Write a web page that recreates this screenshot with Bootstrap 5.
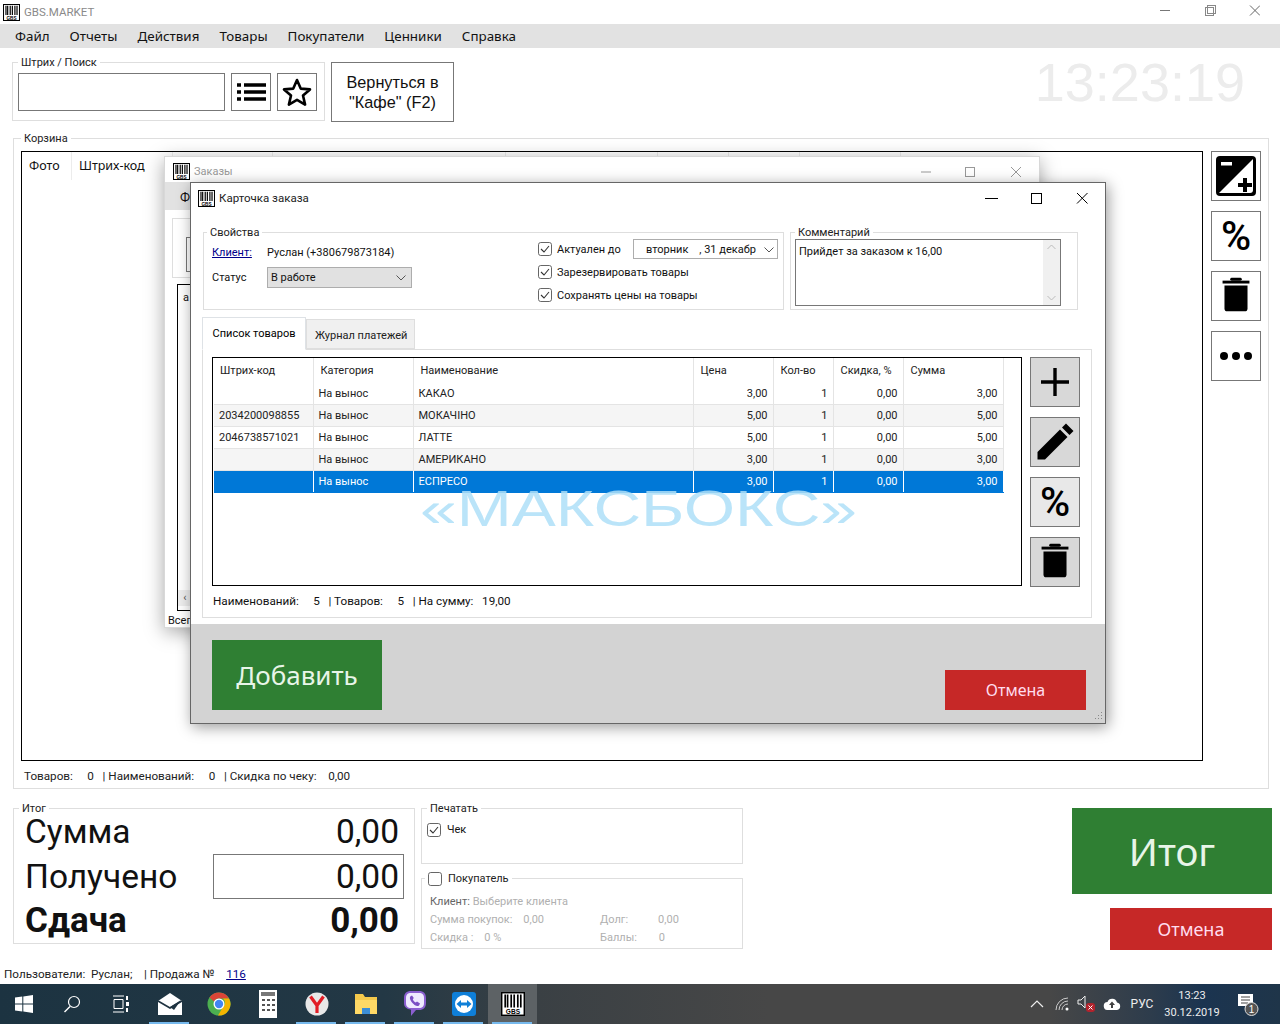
<!DOCTYPE html>
<html lang="ru">
<head>
<meta charset="utf-8">
<title>GBS.MARKET</title>
<link rel="stylesheet" href="https://cdn.jsdelivr.net/npm/bootstrap@5.3.0/dist/css/bootstrap.min.css">
<style>
html,body{height:1024px;overflow:hidden;}
body{position:relative;width:1280px;margin:0;background:#fff;color:#111;font-family:Roboto,"Liberation Sans",Arial,sans-serif;font-size:11px;line-height:14px;}
.appwin{height:984px;overflow:hidden;background:#fff;}
.appwin > *{flex:none;}
.apptitle{height:24px;padding-left:3px;color:#8a8a8a;font-size:11.5px;}
.wctl{position:absolute;top:0;right:20px;height:24px;}
.appmenu{height:24px;background:#e2e2e2;padding-left:15px;gap:20px;font-family:"Noto Sans",sans-serif;font-size:13.4px;color:#111;}
.gbox{border:1px solid #dedede;min-width:0;margin:0;padding:0;}
.gcap{float:none;width:auto;margin:0 0 -1px 5px;padding:1px 3px 0;font-size:11px;line-height:14px;color:#222;}
.gcap + *{clear:none;}
.toprow{margin:7px 0 0 12px;}
.gsearch{width:311px;height:51px;padding:4px 0 0 5px;gap:6px;}
.sinput{width:207px;height:38px;border:1px solid #777;background:#fff;border-radius:0;padding:0 4px;}
.sqbtn{width:40px;height:38px;padding:0;border:1px solid #777;background:#fff;border-radius:0;display:flex;align-items:center;justify-content:center;}
.backbtn{width:123px;height:60px;margin:7px 0 0 6px;border:1px solid #777;background:#fff;border-radius:0;font-family:"Liberation Sans",sans-serif;font-size:16.3px;line-height:20px;padding:0;color:#111;}
.bigclock{margin:-1px 35px 0 auto;font-family:"Liberation Sans",sans-serif;font-size:54px;line-height:56px;color:#ececec;}
.gcart{width:1256px;height:658px;margin:9px 0 0 13px;padding:6px 0 0 7px;}
.gcart .gcap{margin-left:0;}
.cartgrid{width:1182px;height:610px;border:1px solid #000;overflow:hidden;}
.carthead{height:34px;font-family:"Noto Sans",sans-serif;font-size:12.5px;color:#111;}
.chd{border-right:1px solid #ececec;padding:7px 0 0 7px;height:28px;flex:none;}
.w50{width:50px;}.w101{width:101px;}.w100{width:100px;}.w233{width:233px;}.w152{width:152px;}.w71{width:71px;}
.carttools{gap:10px;margin-left:8px;}
.wbtn{width:50px;height:50px;padding:0;border:1px solid #777;background:#fff;border-radius:0;color:#000;font-family:Roboto,sans-serif;font-weight:500;font-size:41px;line-height:46px;display:flex;align-items:center;justify-content:center;}
.gbtn{background:#d8d8d8;}
.ghov{background:#e8e8e8;}
.stline{margin:8px 0 0 3px;white-space:pre;color:#222;font-size:11.7px;}
.botrow{margin:12px 0 0 13px;}
.gsum{width:400px;height:133px;padding:0 10px 0 11px;}
.sumrows{margin-top:-5px;}
.sumline{height:44.5px;line-height:44px;font-size:33.5px;}
.sumbold{font-size:35px;font-weight:700;}
.paidbox{width:191px;height:45px;line-height:43px;border:1px solid #777;padding-right:4px;}
.sumval{padding-right:5px;}
.gside{width:322px;margin-left:6px;}
.gprint{height:63px;padding:0 0 0 5px;}
.gprint .gcap{margin-left:0;}
.chkp{margin-top:7px;gap:6px;}
.gbuyer{height:79px;margin-top:6px;padding:0 0 0 8px;color:#b0b0b0;}
.gbuyer .gcap{margin-left:-5px;gap:6px;}
.buytop{margin-top:7px;}
.ck{width:14px;height:14px;margin:0;border:1px solid #666;border-radius:0;background-color:#fff;flex:none;--bs-form-check-bg-image:none;}
.ck:checked{background-color:#fff;border-color:#666;background-size:12px;background-position:center;background-repeat:no-repeat;background-image:url("data:image/svg+xml,%3Csvg xmlns='http://www.w3.org/2000/svg' viewBox='0 0 12 12'%3E%3Cpath d='M2 6l3 3 5-6' fill='none' stroke='%23333' stroke-width='1.1'/%3E%3C/svg%3E");}
.ck + span{white-space:nowrap;padding-top:1px;}
.buyrow{height:18px;line-height:20px;white-space:pre;}
.buyk{color:#666;}
.col71{width:170px;}
.actcol{margin:7px 8px 0 auto;width:200px;}
.btn-ok{background:#2f7f33;color:#e8f5e8;border:0;border-radius:0;padding:0;font-family:"Noto Sans",sans-serif;}
.btn-no{background:#c62827;color:#fde;border:0;border-radius:0;padding:0;font-family:"Noto Sans",sans-serif;}
.bigok{width:200px;height:86px;font-size:38.5px;}
.bigno{width:162px;height:42px;font-size:18px;margin:14px 0 0 auto;display:block;}
.stbottom{margin:17px 0 0 4px;white-space:pre;color:#222;font-size:11.7px;}
.lnk{color:#00008b;text-decoration:underline;}
/* windows */
.orderswin{position:absolute;left:164px;top:156px;width:876px;height:472px;background:#fff;border:1px solid #d8d8d8;box-shadow:0 4px 18px rgba(0,0,0,.35);z-index:2;}
.ordtitle{height:25px;padding:4px 0 0 8px;color:#999;font-size:11px;}
.ordmenu{height:28px;background:#e2e2e2;padding:9px 0 0 15px;font-size:13px;}
.ordg{width:300px;height:60px;margin:8px 0 0 7px;border:1px solid #dedede;padding:18px 0 0 13px;}
.ordin{width:200px;height:35px;border:1px solid #777;padding:8px 0 0 4px;}
.ordt{width:700px;height:327px;margin:6px 0 0 12px;border:1px solid #000;padding:6px 0 0 5px;position:relative;}
.ordarrow{height:16px;width:14px;background:#eee;position:absolute;left:0;bottom:4px;color:#555;line-height:16px;text-align:center;font-size:11px;}
.ordtot{margin:3px 0 0 3px;}
.cardwin{position:absolute;left:190px;top:182px;width:916px;height:542px;background:#fff;border:1px solid #666;box-shadow:2px 3px 14px rgba(0,0,0,.4);z-index:3;}
.cardtitle{height:30px;padding-left:7px;font-size:11.5px;color:#222;}
.wbx{margin-right:14px;}
.cardbody{padding:12px 0 0 12px;}
.gprops{width:581px;height:85px;padding:0;}
.gprops .gcap{margin-left:3px;}
.gcomm{width:288px;height:85px;margin-left:6px;padding:0 0 0 4px;}
.gcomm .gcap{margin-left:0;}
.propl{width:334px;padding-left:8px;flex:none;}
.propname{height:18px;margin-top:4px;line-height:20px;}
.propname .lnk{width:55px;display:inline-block;}
.stat{height:21px;margin-top:6px;}
.statk{width:55px;}
.selbox{width:145px;height:21px;background:#e1e1e1;border:1px solid #adadad;padding:0 5px 0 3px;}
.rows3{gap:1px;margin-top:-1px;}
.ckrow{height:22px;gap:5px;}
.ckwide{width:71px;}
.datebox{width:145px;height:20px;border:1px solid #adadad;padding:1px 3px 0 12px;white-space:pre;flex:none;}
.commarea{width:266px;height:67px;border:1px solid #777;padding:5px 0 0 3px;position:relative;}
.vscroll{position:absolute;right:0;top:0;width:17px;height:65px;background:#f0f0f0;}
.cnav{margin:7px 0 0 -1px;border-bottom:0;width:890px;}
.cnav .nav-link{border-radius:0;color:#222;font-size:11px;line-height:14px;padding:9px 8px 8px;border:1px solid #dedede;background:#f0f0f0;margin:2px 0 0 0;width:109px;height:30px;white-space:nowrap;text-align:center;}
.cnav .nav-link.active{background:#fff;margin:0;padding:9px 8px;width:104px;height:33px;border-bottom-color:#fff;position:relative;z-index:1;}
.cpane{width:890px;height:269px;margin:-1px 0 0 -1px;border:1px solid #dedede;padding:7px 0 0 9px;}
.cgrid{width:810px;height:229px;border:1px solid #000;overflow:hidden;}
.ctbl{table-layout:fixed;border-collapse:collapse;width:789px;margin:0 0 0 1px;background:transparent;}
.ctbl th{font-weight:400;height:24px;padding:2px 0 0 7px;border-right:1px solid #e4e4e4;vertical-align:middle;color:#222;}
.ctbl th:first-child{padding-left:6px;}
.ctbl td{height:22px;padding:2px 5px 0;border-right:1px solid #e4e4e4;border-bottom:1px solid #e4e4e4;vertical-align:middle;color:#222;white-space:nowrap;overflow:hidden;}
.ctbl .alt td{background:#f5f5f5;}
.ctbl .sel td{background:#0078d7;color:#fff;border-right-color:#fff;border-bottom-color:#0078d7;}
.c1{width:99px;}.c2{width:100px;}.c3{width:280px;}.c4{width:80px;}.c5{width:60px;}.c6{width:70px;}.c7{width:100px;}
.num{text-align:right;}
.ctools{gap:10px;margin-left:8px;}
.cfoot{margin:7px 0 0 1px;white-space:pre;font-size:11.7px;}
.cbottom{position:absolute;left:0;right:0;bottom:0;height:99px;background:#d3d3d3;}
.addbtn{position:absolute;left:21px;top:16px;width:170px;height:70px;font-size:26px;}
.canbtn{position:absolute;left:754px;top:46px;width:141px;height:40px;font-size:16px;}
.grip{position:absolute;right:2px;bottom:2px;}
.wmark{position:absolute;left:420px;top:489px;font-family:"Liberation Sans",sans-serif;font-size:50px;line-height:40px;color:#aee0f8;opacity:.85;z-index:4;white-space:nowrap;pointer-events:none;transform-origin:left center;transform:scaleX(1.32);}
/* taskbar */
.tbar{height:40px;background:linear-gradient(90deg,#1c3341 0,#233845 30%,#3a4044 42%,#474747 60%,#474747 82%,#2d3c4c 90%,#1b3450 94%,#1f3549 100%);color:#eee;}
.tslot{width:49px;height:40px;flex:none;position:relative;}
.tslot.first{width:47px;}
.tslot.on::after{content:"";position:absolute;left:4px;right:5px;bottom:0;height:2px;background:#76b9ed;}
.tslot.act{background:#5d6265;}
.ttray{margin-left:auto;font-size:12px;}
.trayi{width:25px;height:40px;flex:none;}
.tclock{width:56px;text-align:center;line-height:17px;margin-left:4px;font-size:11px;}
.tlang{width:36px;text-align:center;}
.tnote{width:60px;height:40px;padding-right:6px;}
</style>
</head>
<body>
<svg width="0" height="0" class="d-none">
<symbol id="logo" viewBox="0 0 20 20"><rect x=".6" y=".6" width="18.8" height="18.8" fill="#fff" stroke="#000" stroke-width="1.2"/><path d="M3.500 2v11M5.500 2v11M8.500 2v11M11 2v11M14 2v11M16.500 2v11" stroke="#000" stroke-width="1.4"/><text x="10" y="18.300" font-size="5.500" text-anchor="middle" fill="#000" font-family="Liberation Sans" font-weight="700">GBS</text></symbol>
<symbol id="trash" viewBox="0 0 50 50"><rect x="11" y="9" width="28" height="3" fill="#000"/><rect x="19" y="6" width="12" height="3" rx="1.5" fill="#000"/><path d="M13 14h24v24a3 3 0 0 1-3 3H16a3 3 0 0 1-3-3z" fill="#000"/></symbol>
</svg>

<div class="appwin d-flex flex-column">
  <div class="apptitle d-flex align-items-center gap-1 position-relative">
    <svg width="17" height="17"><use href="#logo"/></svg><span>GBS.MARKET</span>
    <svg class="wctl" width="130" height="24" viewBox="0 0 130 24"><path d="M30 10.500h10" stroke="#777"/><rect x="75.500" y="7.500" width="8" height="8" fill="none" stroke="#888"/><rect x="77.500" y="5.500" width="8" height="8" fill="none" stroke="#888"/><path d="M120 5.500l10 10M130 5.500l-10 10" stroke="#666"/></svg>
  </div>
  <nav class="appmenu d-flex align-items-center"><span>Файл</span><span>Отчеты</span><span>Действия</span><span>Товары</span><span>Покупатели</span><span>Ценники</span><span>Справка</span></nav>

  <div class="toprow d-flex align-items-start">
    <fieldset class="gbox">
      <legend class="gcap">Штрих / Поиск</legend>
      <div class="gsearch d-flex align-items-start">
        <input class="sinput" type="text" aria-label="Штрих / Поиск">
        <button class="sqbtn" aria-label="Список"><svg width="32" height="22" viewBox="0 0 32 22"><path d="M9 4h22M9 11h22M9 18h22" stroke="#000" stroke-width="3.400"/><path d="M2 4h4M2 11h4M2 18h4" stroke="#000" stroke-width="3.400"/></svg></button>
        <button class="sqbtn" aria-label="Избранное"><svg width="32" height="30" viewBox="0 0 32 30"><path d="M16 3l3.700 8.600 9.300.8-7 6.100 2.100 9.100L16 22.800l-8.100 4.800L10 18.500l-7-6.100 9.300-.8z" fill="none" stroke="#000" stroke-width="2.600" stroke-linejoin="round"/></svg></button>
      </div>
    </fieldset>
    <button class="backbtn">Вернуться в<br>"Кафе" (F2)</button>
    <div class="bigclock">13:23:19</div>
  </div>

  <fieldset class="gbox gcart">
    <legend class="gcap">Корзина</legend>
    <div class="d-flex">
      <div class="cartgrid">
        <div class="carthead d-flex">
          <div class="chd w50">Фото</div><div class="chd w101">Штрих-код</div><div class="chd w100"></div><div class="chd w233"></div><div class="chd w152"></div><div class="chd w71"></div><div class="chd w71"></div><div class="chd w101"></div>
        </div>
      </div>
      <div class="carttools d-flex flex-column">
        <button class="wbtn" aria-label="Экспозиция"><svg width="44" height="44" viewBox="0 0 44 44"><rect x="2" y="2" width="40" height="40" rx="4" fill="#000"/><path d="M39 5L5 39h31a3 3 0 0 0 3-3z" fill="#fff"/><rect x="7" y="8" width="11" height="3.500" fill="#fff"/><path d="M29 24h4v5h5v4h-5v5h-4v-5h-5v-4h5z" fill="#000"/></svg></button>
        <button class="wbtn">%</button>
        <button class="wbtn" aria-label="Удалить"><svg width="48" height="48"><use href="#trash"/></svg></button>
        <button class="wbtn" aria-label="Ещё"><svg width="36" height="12" viewBox="0 0 36 12"><circle cx="6" cy="6" r="4" fill="#000"/><circle cx="18" cy="6" r="4" fill="#000"/><circle cx="30" cy="6" r="4" fill="#000"/></svg></button>
      </div>
    </div>
    <div class="stline">Товаров:     0   | Наименований:     0   | Скидка по чеку:    0,00</div>
  </fieldset>

  <div class="botrow d-flex align-items-start">
    <fieldset class="gbox">
      <legend class="gcap">Итог</legend>
      <div class="gsum">
        <div class="sumrows">
          <div class="sumline d-flex align-items-center justify-content-between"><span>Сумма</span><span class="sumval">0,00</span></div>
          <div class="sumline d-flex align-items-center justify-content-between"><span>Получено</span><span class="paidbox text-end">0,00</span></div>
          <div class="sumline sumbold d-flex align-items-center justify-content-between"><span>Сдача</span><span class="sumval">0,00</span></div>
        </div>
      </div>
    </fieldset>
    <div class="gside">
      <fieldset class="gbox gprint">
        <legend class="gcap">Печатать</legend>
        <div class="d-flex align-items-center chkp"><input class="form-check-input ck" type="checkbox" checked aria-label="Чек"><span>Чек</span></div>
      </fieldset>
      <fieldset class="gbox gbuyer">
        <legend class="gcap d-flex align-items-center"><input class="form-check-input ck" type="checkbox" aria-label="Покупатель"><span>Покупатель</span></legend>
        <div class="buyrow buytop"><span class="buyk">Клиент:</span> Выберите клиента</div>
        <div class="d-flex"><div class="col71 buyrow">Сумма покупок:    0,00</div><div class="buyrow">Долг:           0,00</div></div>
        <div class="d-flex"><div class="col71 buyrow">Скидка :    0 %</div><div class="buyrow">Баллы:        0</div></div>
      </fieldset>
    </div>
    <div class="actcol">
      <button class="btn-ok bigok">Итог</button>
      <button class="btn-no bigno">Отмена</button>
    </div>
  </div>
  <div class="stbottom">Пользователи:  Руслан;    | Продажа №    <span class="lnk">116</span></div>
</div>

<div class="orderswin">
  <div class="ordtitle d-flex align-items-center gap-1"><svg width="17" height="17"><use href="#logo"/></svg><span>Заказы</span>
    <svg class="ms-auto me-3" width="110" height="14" viewBox="0 0 110 14"><path d="M8 7h10" stroke="#999"/><rect x="52.500" y="2.500" width="9" height="9" fill="none" stroke="#999"/><path d="M98 2l10 10M108 2L98 12" stroke="#999"/></svg>
  </div>
  <div class="ordmenu">Ф</div>
  <div class="ordg"><div class="ordin">В</div></div>
  <div class="ordt">а<div class="ordarrow">‹</div></div>
  <div class="ordtot">Всег</div>
</div>

<div class="cardwin">
  <div class="cardtitle d-flex align-items-center gap-1"><svg width="17" height="17"><use href="#logo"/></svg><span>Карточка заказа</span>
    <svg class="ms-auto wbx" width="110" height="14" viewBox="0 0 110 14"><path d="M4 7.500h13" stroke="#000"/><rect x="50.500" y="2.500" width="10" height="10" fill="none" stroke="#000"/><path d="M96 2l10.500 10.500M106.500 2L96 12.500" stroke="#000"/></svg>
  </div>
  <div class="cardbody">
    <div class="d-flex">
      <fieldset class="gbox gprops">
        <legend class="gcap">Свойства</legend>
        <div class="d-flex">
          <div class="propl">
            <div class="propname"><span class="lnk">Клиент:</span>Руслан (+380679873184)</div>
            <div class="stat d-flex align-items-center"><span class="statk">Статус</span><div class="selbox d-flex align-items-center justify-content-between"><span>В работе</span><svg width="10" height="6" viewBox="0 0 10 6"><path d="M.5.5L5 5l4.500-4.500" fill="none" stroke="#555"/></svg></div></div>
          </div>
          <div class="rows3 d-flex flex-column">
            <div class="ckrow d-flex align-items-center"><input class="form-check-input ck" type="checkbox" checked aria-label="Актуален до"><span class="ckwide">Актуален до</span><div class="datebox d-flex align-items-center justify-content-between"><span>вторник    , 31 декабр</span><svg width="10" height="6" viewBox="0 0 10 6"><path d="M.5.5L5 5l4.500-4.500" fill="none" stroke="#555"/></svg></div></div>
            <div class="ckrow d-flex align-items-center"><input class="form-check-input ck" type="checkbox" checked aria-label="Зарезервировать товары"><span>Зарезервировать товары</span></div>
            <div class="ckrow d-flex align-items-center"><input class="form-check-input ck" type="checkbox" checked aria-label="Сохранять цены на товары"><span>Сохранять цены на товары</span></div>
          </div>
        </div>
      </fieldset>
      <fieldset class="gbox gcomm">
        <legend class="gcap">Комментарий</legend>
        <div class="commarea">Прийдет за заказом к 16,00
          <div class="vscroll d-flex flex-column justify-content-between align-items-center py-1"><svg width="9" height="6" viewBox="0 0 9 6"><path d="M.5 5L4.500 1l4 4" fill="none" stroke="#bbb"/></svg><svg width="9" height="6" viewBox="0 0 9 6"><path d="M.5 1l4 4 4-4" fill="none" stroke="#bbb"/></svg></div>
        </div>
      </fieldset>
    </div>

    <ul class="nav nav-tabs cnav">
      <li class="nav-item"><span class="nav-link active">Список товаров</span></li>
      <li class="nav-item"><span class="nav-link">Журнал платежей</span></li>
    </ul>
    <div class="cpane">
      <div class="d-flex">
        <div class="cgrid">
          <table class="ctbl">
            <colgroup><col class="c1"><col class="c2"><col class="c3"><col class="c4"><col class="c5"><col class="c6"><col class="c7"></colgroup>
            <thead><tr><th>Штрих-код</th><th>Категория</th><th>Наименование</th><th>Цена</th><th>Кол-во</th><th>Скидка, %</th><th>Сумма</th></tr></thead>
            <tbody>
              <tr><td></td><td>На вынос</td><td>КАКАО</td><td class="num">3,00</td><td class="num">1</td><td class="num">0,00</td><td class="num">3,00</td></tr>
              <tr class="alt"><td>2034200098855</td><td>На вынос</td><td>МОКАЧІНО</td><td class="num">5,00</td><td class="num">1</td><td class="num">0,00</td><td class="num">5,00</td></tr>
              <tr><td>2046738571021</td><td>На вынос</td><td>ЛАТТЕ</td><td class="num">5,00</td><td class="num">1</td><td class="num">0,00</td><td class="num">5,00</td></tr>
              <tr class="alt"><td></td><td>На вынос</td><td>АМЕРИКАНО</td><td class="num">3,00</td><td class="num">1</td><td class="num">0,00</td><td class="num">3,00</td></tr>
              <tr class="sel"><td></td><td>На вынос</td><td>ЕСПРЕСО</td><td class="num">3,00</td><td class="num">1</td><td class="num">0,00</td><td class="num">3,00</td></tr>
            </tbody>
          </table>
        </div>
        <div class="ctools d-flex flex-column">
          <button class="wbtn gbtn" aria-label="Добавить"><svg width="32" height="32" viewBox="0 0 32 32"><path d="M16 2v28M2 16h28" stroke="#000" stroke-width="3.400"/></svg></button>
          <button class="wbtn gbtn" aria-label="Изменить"><svg width="40" height="40" viewBox="0 0 40 40"><path d="M31 1.500l7.500 7.500-4 4L27 5.500zM25 7.500L32.500 15 10 37.500H2.500V30z" fill="#000"/></svg></button>
          <button class="wbtn ghov">%</button>
          <button class="wbtn gbtn" aria-label="Удалить"><svg width="48" height="48"><use href="#trash"/></svg></button>
        </div>
      </div>
      <div class="cfoot">Наименований:     5   | Товаров:     5   | На сумму:   19,00</div>
    </div>
  </div>
  <div class="cbottom">
    <button class="btn-ok addbtn">Добавить</button>
    <button class="btn-no canbtn">Отмена</button>
    <svg class="grip" width="10" height="10" viewBox="0 0 10 10"><path d="M8 1h1v1H8zM5 4h1v1H5zM8 4h1v1H8zM2 7h1v1H2zM5 7h1v1H5zM8 7h1v1H8z" fill="#888"/></svg>
  </div>
</div>

<div class="wmark">«МАКСБОКС»</div>

<footer class="tbar d-flex align-items-center">
  <div class="tslot first d-flex align-items-center justify-content-center"><svg width="18" height="18" viewBox="0 0 18 18"><path d="M0 2.600l7.300-1v7H0zM8.300 1.400L18 0v8.600H8.300zM0 9.600h7.300v7L0 15.500zM8.300 9.600H18V18l-9.700-1.400z" fill="#fff"/></svg></div>
  <div class="tslot d-flex align-items-center justify-content-center"><svg width="18" height="18" viewBox="0 0 18 18"><circle cx="11" cy="7" r="5.500" fill="none" stroke="#fff" stroke-width="1.200"/><path d="M7 11.500l-5.500 5.500" stroke="#fff" stroke-width="1.400"/></svg></div>
  <div class="tslot d-flex align-items-center justify-content-center"><svg width="18" height="18" viewBox="0 0 18 18"><path d="M1 1h11M1 17h11M2 4.500h9v9H2z" fill="none" stroke="#fff"/><rect x="14" y="1" width="2" height="4" fill="#fff"/><rect x="14" y="7" width="3" height="4" fill="#fff"/><rect x="14" y="13" width="2" height="4" fill="#fff"/></svg></div>
  <div class="tslot on d-flex align-items-center justify-content-center"><svg width="26" height="24" viewBox="0 0 26 24"><path d="M1 9L13 1l12 8v14H1z" fill="#fff"/><path d="M1 9l12 7 12-7" fill="none" stroke="#1f3341" stroke-width="1.600"/><path d="M13 15l11-7-7 10z" fill="#1f3341"/></svg></div>
  <div class="tslot d-flex align-items-center justify-content-center"><svg width="24" height="24" viewBox="0 0 24 24"><circle cx="12" cy="12" r="11.500" fill="#4caf50"/><path d="M12 .5A11.500 11.500 0 0 1 22 6.500H12A5.500 5.500 0 0 0 7 9.500L2.500 5.500A11.500 11.500 0 0 1 12 .5z" fill="#db4437"/><path d="M22 6.500A11.500 11.500 0 0 1 11 23.500l5-8.500a5.500 5.500 0 0 0 0-8.500z" fill="#f4b400"/><circle cx="12" cy="12" r="5.500" fill="#fff"/><circle cx="12" cy="12" r="4.200" fill="#4285f4"/></svg></div>
  <div class="tslot d-flex align-items-center justify-content-center"><svg width="18" height="28" viewBox="0 0 18 28"><rect width="18" height="28" fill="#fff"/><rect x="2" y="2" width="14" height="4" fill="#777"/><path d="M3 9h3v2H3zM8 9h3v2H8zM13 9h3v2h-3zM3 14h3v2H3zM8 14h3v2H8zM13 14h3v2h-3zM3 19h3v2H3zM8 19h3v2H8zM13 19h3v2h-3z" fill="#555"/></svg></div>
  <div class="tslot on d-flex align-items-center justify-content-center"><svg width="24" height="24" viewBox="0 0 24 24"><circle cx="12" cy="12" r="11.500" fill="#e8e8e8"/><path d="M5.500 4.500L12 13.500l6.500-9M12 13.500V21" fill="none" stroke="#e11d26" stroke-width="3.200"/></svg></div>
  <div class="tslot on d-flex align-items-center justify-content-center"><svg width="24" height="22" viewBox="0 0 24 22"><path d="M1 1h8l2 3h12v17H1z" fill="#f5c94c"/><rect x="1" y="7" width="22" height="14" fill="#ffd966"/><rect x="8" y="15" width="8" height="6" fill="#3d8ed6"/></svg></div>
  <div class="tslot on d-flex align-items-center justify-content-center"><svg width="24" height="28" viewBox="0 0 24 28"><path d="M8 1h8c4.500 0 7 2.500 7 7v5c0 4.500-2.500 7-7 7h-3l-5 6v-6.300C3.500 19 1 17 1 13V8c0-4.500 2.500-7 7-7z" fill="#8b5fd0"/><path d="M8 3h8c3.500 0 5 1.500 5 5v5c0 3.500-1.500 5-5 5H8c-3.500 0-5-1.500-5-5V8c0-3.500 1.500-5 5-5z" fill="#efeaff"/><path d="M8 6c-2 1-1 4 1 6.500s5 4.500 7 3l1-2-3-2-1.200 1c-1.300-.6-2.600-2-3-3.300l1-1.200L9 5.500z" fill="#7b4fc4"/></svg></div>
  <div class="tslot on d-flex align-items-center justify-content-center"><svg width="24" height="24" viewBox="0 0 24 24"><rect width="24" height="24" rx="3" fill="#0f7fd8"/><circle cx="12" cy="12" r="9" fill="#fff"/><path d="M4.500 12L9 8v2.500h6V8l4.500 4-4.500 4v-2.500H9V16z" fill="#0f7fd8"/></svg></div>
  <div class="tslot on act d-flex align-items-center justify-content-center"><svg width="24" height="24"><use href="#logo"/></svg></div>
  <div class="ttray d-flex align-items-center">
    <div class="trayi d-flex align-items-center justify-content-center"><svg width="14" height="8" viewBox="0 0 14 8"><path d="M1 7l6-6 6 6" fill="none" stroke="#eee" stroke-width="1.200"/></svg></div>
    <div class="trayi d-flex align-items-center justify-content-center"><svg width="14" height="14" viewBox="0 0 14 14"><path d="M1 13A12 12 0 0 1 13 1M4 13a9 9 0 0 1 9-9M7 13a6 6 0 0 1 6-6" fill="none" stroke="#ccc"/><circle cx="12" cy="12" r="1.500" fill="#fff"/></svg></div>
    <div class="trayi d-flex align-items-center justify-content-center"><svg width="20" height="18" viewBox="0 0 20 18"><path d="M1 5h3l4-4v12L4 9H1z" fill="none" stroke="#eee"/><rect x="9" y="8" width="9" height="9" rx="3" fill="#b3232d"/><path d="M11.500 10.500l4 4M15.500 10.500l-4 4" stroke="#fff"/></svg></div>
    <div class="trayi d-flex align-items-center justify-content-center"><svg width="18" height="12" viewBox="0 0 18 12"><path d="M5 12A4 4 0 0 1 4.500 4 5 5 0 0 1 14 4.500 3.800 3.800 0 0 1 14 12z" fill="#fff"/><path d="M9 3.500L6 7h2v3h2V7h2z" fill="#424242"/></svg></div>
    <div class="tlang">РУС</div>
    <div class="tclock">13:23<br>30.12.2019</div>
    <div class="tnote d-flex align-items-center justify-content-center"><svg width="24" height="26" viewBox="0 0 24 26"><path d="M3 3h15v12h-5l-3 3v-3H3z" fill="#fff"/><path d="M6 6h9M6 9h9M6 12h7" stroke="#444"/><circle cx="16.500" cy="18" r="6.500" fill="#555" stroke="#ddd"/><text x="16.500" y="21.500" font-size="10" text-anchor="middle" fill="#fff" font-family="Liberation Sans">1</text></svg></div>
  </div>
</footer>
</body>
</html>
